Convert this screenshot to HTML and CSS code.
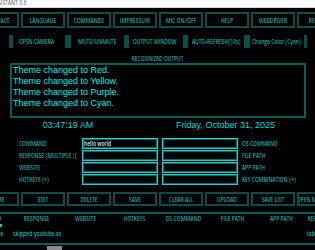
FILE: index.html
```html
<!DOCTYPE html>
<html>
<head>
<meta charset="utf-8">
<link rel="stylesheet" href="styles.css">
</head>
<body>
<div class="app">
  <div class="titlebar"><span class="title narrow">ASSISTANT 3.6</span></div>

  <div class="btnrow toprow narrow">
    <div class="btn">INTERFACE</div>
    <div class="btn">LANGUAGE</div>
    <div class="btn">COMMANDS</div>
    <div class="btn">IMPRESSUM</div>
    <div class="btn">MIC ON/OFF</div>
    <div class="btn">HELP</div>
    <div class="btn">WEBDRIVER</div>
    <div class="btn">RESTART</div>
  </div>

  <div class="toggles narrow">
    <div class="bar bar1"></div>
    <div class="tlabel t1">OPEN CAMERA</div>
    <div class="bar bar2"></div>
    <div class="tlabel t2">MUTE/UNMUTE</div>
    <div class="bar bar3"></div>
    <div class="tlabel t3">OUTPUT WINDOW</div>
    <div class="bar bar4"></div>
    <div class="tlabel t4">AUTO-REFRESH(10s)</div>
    <div class="bar bar5"></div>
    <div class="tlabel t5">Change Color (Cyan)</div>
    <div class="bar bar6"></div>
  </div>

  <div class="section-label narrow">RECOGNIZED OUTPUT</div>
  <div class="output">
    <div>Theme changed to Red.</div>
    <div>Theme changed to Yellow.</div>
    <div>Theme changed to Purple.</div>
    <div>Theme changed to Cyan.</div>
  </div>

  <div class="clock">
    <span>03:47:19 AM</span>
    <span>Friday, October 31, 2025</span>
  </div>

  <div class="form narrow">
    <div class="flabel">COMMAND</div>
    <div class="field">hello world</div>
    <div class="field"></div>
    <div class="rlabel">OS COMMAND</div>

    <div class="flabel">RESPONSE (MULTIPLE ;)</div>
    <div class="field"></div>
    <div class="field"></div>
    <div class="rlabel">FILE PATH</div>

    <div class="flabel">WEBSITE</div>
    <div class="field"></div>
    <div class="field"></div>
    <div class="rlabel">APP PATH</div>

    <div class="flabel">HOTKEYS (+)</div>
    <div class="field"></div>
    <div class="field"></div>
    <div class="rlabel">KEY COMBINATION (+)</div>
  </div>

  <div class="btnrow bottomrow narrow">
    <div class="btn">STORE</div>
    <div class="btn">EDIT</div>
    <div class="btn">DELETE</div>
    <div class="btn">SAVE</div>
    <div class="btn">CLEAR ALL</div>
    <div class="btn">UPLOAD</div>
    <div class="btn">SAVE LIST</div>
    <div class="btn">OPEN MIC FOLDER</div>
  </div>

  <div class="table narrow">
    <div class="thead">
      <div>COMMAND</div>
      <div>RESPONSE</div>
      <div>WEBSITE</div>
      <div>HOTKEYS</div>
      <div>OS COMMAND</div>
      <div>FILE PATH</div>
      <div>APP PATH</div>
      <div>KEY COMBINATION</div>
    </div>
    <div class="tick"></div>
    <div class="trow">
      <div>skip on youtube</div>
      <div>skipped youtube ad</div>
      <div></div>
      <div></div>
      <div></div>
      <div></div>
      <div></div>
      <div>tab</div>
    </div>
    <div class="tfoot"><div class="thumb"></div></div>
  </div>
</div>
</body>
</html>
```

FILE: styles.css
```css
* { box-sizing: border-box; }
html, body { margin: 0; padding: 0; background: #000; }
body {
  width: 315px;
  height: 250px;
  overflow: hidden;
  font-family: "Liberation Sans", Arial, sans-serif;
}
.app { width: 315px; height: 250px; overflow: hidden; }
.narrow {
  font-family: "Open Sans", "Liberation Sans", sans-serif;
  font-stretch: 75%;
}

.titlebar {
  height: 8px;
  background: #fff;
  border-bottom: 1px solid #d8d8d8;
  overflow: hidden;
  white-space: nowrap;
}
.title {
  display: block;
  margin-left: -8px;
  font-size: 7px;
  line-height: 6px;
  color: #6e6e6e;
}

.btnrow { display: flex; gap: 2px; margin-left: -25px; }
.toprow { margin-top: 4px; }
.bottomrow { margin-top: 7px; }
.btn {
  flex: 0 0 44px;
  height: 16px;
  border: 2px solid #0c4c4c;
  display: flex;
  align-items: center;
  justify-content: center;
  overflow: hidden;
  white-space: nowrap;
  color: #1cbcbc;
  font-size: 7px;
}
.bottomrow .btn { height: 14px; }

.toggles { display: flex; height: 13px; margin-top: 7px; }
.bar { background: #0c4c4c; flex: none; }
.bar1 { margin-left: 9px; width: 4px; }
.bar2 { width: 6px; }
.bar3 { width: 5px; }
.bar4 { width: 5px; }
.bar5 { width: 6px; }
.bar6 { width: 3px; }
.tlabel {
  flex: none;
  display: flex;
  align-items: center;
  white-space: nowrap;
  overflow: hidden;
  color: #1cbcbc;
  font-size: 7px;
}
.t1 { width: 52px; padding-left: 6px; }
.t2 { width: 53px; padding-left: 7px; }
.t3 { width: 54px; padding-left: 4px; }
.t4 { width: 56px; padding-left: 4px; }
.t5 { width: 54px; padding-left: 2px; }

.section-label {
  margin-top: 6px;
  height: 9px;
  line-height: 9px;
  text-align: center;
  font-size: 7px;
  color: #1cbcbc;
}

.output {
  margin: 0 9px 0 10px;
  height: 55px;
  border: 2px solid #0c5a5a;
  padding: 0 0 0 1px;
  font-size: 9px;
  line-height: 11px;
  color: #00eeee;
}

.clock {
  display: grid;
  grid-template-columns: 136px 1fr;
  margin-top: 1px;
  height: 12px;
  line-height: 12px;
  font-size: 9px;
  color: #00dcdc;
  text-align: center;
}

.form {
  display: grid;
  grid-template-columns: 82px 80px 80px 1fr;
  grid-auto-rows: 11px;
  row-gap: 1px;
  margin-top: 7px;
}
.flabel, .rlabel {
  font-size: 7px;
  line-height: 11px;
  color: #1cbcbc;
  white-space: nowrap;
}
.flabel { padding-left: 19px; }
.field {
  width: 76px;
  height: 11px;
  border: 1px solid #22d0d0;
  box-shadow: inset 0 0 0 1px #0b6868;
  padding-left: 1px;
  font-size: 7px;
  line-height: 9px;
  color: #e2ffff;
  white-space: nowrap;
  overflow: hidden;
}

.table { margin-top: 6px; margin-left: -37px; width: 392px; }
.thead, .trow {
  display: grid;
  grid-template-columns: repeat(8, 49px);
}
.thead {
  border-top: 2px solid #0c5a5a;
  height: 12px;
  line-height: 10px;
}
.thead div {
  text-align: center;
  white-space: nowrap;
  font-size: 7px;
  color: #1cbcbc;
}
.tick { margin-left: 37px; width: 2px; height: 3px; background: #19c0c0; }
.trow { height: 12px; line-height: 12px; }
.trow div {
  padding-left: 1px;
  white-space: nowrap;
  overflow: hidden;
  font-size: 7.2px;
  color: #1cc4c4;
}
.tfoot {
  margin-top: 4px;
  border-top: 2px solid #0c5a5a;
  height: 6px;
  padding-top: 1px;
}
.thumb { margin-left: 84px; width: 15px; height: 4px; background: #8a8a8a; }
```
